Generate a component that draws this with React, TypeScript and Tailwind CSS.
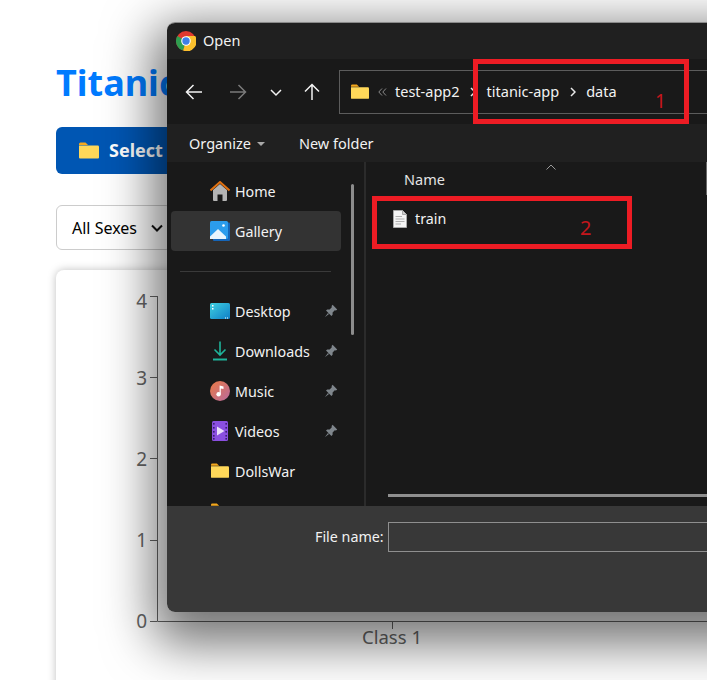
import React from 'react';

const FONT = "font-['Noto_Sans','Open_Sans',sans-serif]";

// Small helpers for the Windows shell icons
const ChromeIcon = () => (
  <svg width="20" height="20" viewBox="0 0 20 20">
    <circle cx="10" cy="10" r="10" fill="#e0392e" />
    <path d="M10 10 L1.34 5 A10 10 0 0 0 7.2 19.6 Z" fill="#2e9e4f" />
    <path d="M10 5 H19.2 A10 10 0 0 1 7.2 19.6 L10 10 Z" fill="#fbc02d" />
    <circle cx="10" cy="10" r="4.8" fill="#fff" />
    <circle cx="10" cy="10" r="3.7" fill="#3f7fe8" />
  </svg>
);

const FolderIcon = ({ size = 20 }: { size?: number }) => (
  <svg width={size} height={size * 0.85} viewBox="0 0 20 17">
    <path d="M0 2 Q0 0.5 1.5 0.5 H6.5 L9 3 H0 Z" fill="#f5a81c" />
    <path d="M0 3.5 H18.8 Q20 3.5 20 4.7 V15.5 Q20 16.5 19 16.5 H1 Q0 16.5 0 15.5 Z" fill="#ffd859" />
  </svg>
);

const PinIcon = () => (
  <svg width="14" height="14" viewBox="0 0 14 14" className="ml-auto">
    <path d="M8.6 0.8 L13.2 5.4 L12 6.4 L10.8 6.2 L8.6 8.4 L8.6 10.8 L7.4 12 L2 6.6 L3.2 5.4 L5.6 5.4 L7.8 3.2 L7.6 2 Z" fill="#7f868c" />
    <path d="M4 9 L0.8 13.2 L5 10 Z" fill="#7f868c" />
  </svg>
);

const HomeIcon = () => (
  <svg width="20" height="20" viewBox="0 0 20 20">
    <path d="M3 9 L10 3 L17 9 V19 Q17 20 16 20 H12.5 V13.5 H7.5 V20 H4 Q3 20 3 19 Z" fill="#b5b5b5" />
    <path d="M0.5 9.5 L10 1 L19.5 9.5" fill="none" stroke="#e07010" strokeWidth="2" />
  </svg>
);

const GalleryIcon = () => (
  <svg width="20" height="20" viewBox="0 0 20 20">
    <rect x="3" y="1.5" width="17" height="18.5" rx="1" fill="#1565b8" />
    <rect x="0" y="0" width="18" height="18" rx="1.5" fill="#2b9cec" />
    <path d="M0 18 V15.5 L8 8 L16 15.5 V18 Z" fill="#e8f4fc" />
    <circle cx="13.5" cy="4.5" r="1.3" fill="#fff" />
  </svg>
);

const DesktopIcon = () => (
  <svg width="20" height="16" viewBox="0 0 20 16">
    <defs>
      <linearGradient id="desk" x1="0" y1="0" x2="1" y2="1">
        <stop offset="0" stopColor="#3fd0e0" />
        <stop offset="1" stopColor="#0f7fc8" />
      </linearGradient>
    </defs>
    <rect width="20" height="16" rx="1.5" fill="url(#desk)" />
    <rect x="2" y="2" width="1.5" height="1.5" fill="#fff" />
    <rect x="2" y="5" width="1.5" height="1.5" fill="#fff" />
    <rect x="15" y="14.5" width="1" height="1" fill="#fff" />
    <rect x="17" y="14.5" width="1" height="1" fill="#fff" />
  </svg>
);

const DownloadIcon = () => (
  <svg width="20" height="20" viewBox="0 0 20 20" fill="none" stroke="#1fb39a" strokeWidth="1.6">
    <path d="M10 0.5 V13.5 M4.5 8.5 L10 14 L15.5 8.5" />
    <path d="M3 18.5 H17" strokeWidth="2" />
  </svg>
);

const MusicIcon = () => (
  <svg width="20" height="20" viewBox="0 0 20 20">
    <defs>
      <linearGradient id="music" x1="0" y1="0" x2="1" y2="1">
        <stop offset="0" stopColor="#ea7a45" />
        <stop offset="1" stopColor="#b76a9e" />
      </linearGradient>
    </defs>
    <circle cx="10" cy="10" r="10" fill="url(#music)" />
    <circle cx="8.6" cy="13.2" r="2.2" fill="#fff" />
    <path d="M9.6 13 V4.5 L13.5 5.5 V8 L10.8 7.4 V13 Z" fill="#fff" />
  </svg>
);

const VideoIcon = () => (
  <svg width="16" height="20" viewBox="0 0 16 20">
    <rect width="16" height="20" rx="1.5" fill="#8a4fe0" />
    <path d="M5 5.5 L12.5 10 L5 14.5 Z" fill="#e9defa" />
    {[2, 6, 10, 14, 17].map((y) => (
      <g key={y}>
        <rect x="1" y={y} width="1.6" height="1.6" fill="#3a1d73" />
        <rect x="13.4" y={y} width="1.6" height="1.6" fill="#3a1d73" />
      </g>
    ))}
  </svg>
);

const FileIcon = () => (
  <svg width="14" height="18" viewBox="0 0 14 18">
    <path d="M0.5 0.5 H9.5 L13.5 4.5 V17.5 H0.5 Z" fill="#f4f4f4" stroke="#a8a8a8" />
    <path d="M9.5 0.5 V4.5 H13.5" fill="#cfcfcf" stroke="#a8a8a8" />
    <path d="M2.5 6.5 H9 M2.5 9 H11.5 M2.5 11.5 H11.5 M2.5 14 H8" stroke="#b0b0b0" />
  </svg>
);

const ArrowIcon = ({ d, color }: { d: string; color: string }) => (
  <svg width="18" height="18" viewBox="0 0 18 18" fill="none" stroke={color} strokeWidth="1.5">
    <path d={d} />
  </svg>
);

// Breadcrumb separator, centred in the gap between two path parts
const Crumb = () => (
  <span className="flex w-[27px] shrink-0 justify-center">
    <svg width="6" height="10" viewBox="0 0 6 10" fill="none" stroke="#e8e8e8" strokeWidth="1.5">
      <path d="M1 1 L5 5 L1 9" />
    </svg>
  </span>
);

const places = [
  { name: 'Desktop', icon: <DesktopIcon />, pinned: true },
  { name: 'Downloads', icon: <DownloadIcon />, pinned: true },
  { name: 'Music', icon: <MusicIcon />, pinned: true },
  { name: 'Videos', icon: <VideoIcon />, pinned: true },
  { name: 'DollsWar', icon: <FolderIcon size={18} />, pinned: false },
  { name: '', icon: <FolderIcon size={18} />, pinned: false },
];

const SideRow = ({ icon, name, pinned, active }: { icon: React.ReactNode; name: string; pinned?: boolean; active?: boolean }) => (
  <div className={`flex h-10 w-[170px] shrink-0 items-center rounded-sm pr-[3px] ${active ? 'bg-[#333333]' : ''}`}>
    <span className="ml-[29px] mr-[-4px] flex w-[39px] shrink-0 justify-center">{icon}</span>
    <span className="pt-[2px] text-[14.3px] text-[#f2f2f2]">{name}</span>
    {pinned && <PinIcon />}
  </div>
);

// Chart sitting in the white card, mostly covered by the dialog
const Chart = () => {
  const ticks = [
    { label: '4', y: 296, base: 308 },
    { label: '3', y: 377, base: 385 },
    { label: '2', y: 458, base: 466 },
    { label: '1', y: 540, base: 547 },
    { label: '0', y: 621, base: 628 },
  ];
  return (
    <svg width="660" height="410" viewBox="56 270 660 410" className="block">
      <path d="M157.5 296 V621.5 H716" fill="none" stroke="#666666" />
      {ticks.map((t) => (
        <g key={t.label}>
          <path d={`M150 ${t.y + 0.5} H157`} stroke="#666666" />
          <text x="147" y={t.base} textAnchor="end" fontSize="19" fill="#666666" fontFamily="Noto Sans, sans-serif">
            {t.label}
          </text>
        </g>
      ))}
      <path d="M392.5 622 V629" stroke="#666666" />
      <text x="392" y="644" textAnchor="middle" fontSize="18.5" fill="#666666" fontFamily="Noto Sans, sans-serif">
        Class 1
      </text>
    </svg>
  );
};

const OpenDialog = () => (
  <div className={`absolute left-[167px] top-[22px] flex h-[590px] w-[640px] flex-col overflow-hidden rounded-l-lg border-t border-t-[#8a8a8a] shadow-[0_18px_50px_14px_rgba(0,0,0,0.55)] ${FONT}`}>
    {/* Title bar */}
    <div className="flex h-[36px] shrink-0 items-center gap-[7px] bg-[#202020] pb-[1px] pl-[9px]">
      <ChromeIcon />
      <span className="text-[14.5px] text-[#f2f2f2]">Open</span>
    </div>

    {/* Navigation bar */}
    <div className="flex h-[65px] shrink-0 items-center bg-[#191919]">
      <span className="ml-[18px]"><ArrowIcon d="M17 9 H1.5 M8.5 2 L1.5 9 L8.5 16" color="#f2f2f2" /></span>
      <span className="ml-[26px]"><ArrowIcon d="M1 9 H16.5 M9.5 2 L16.5 9 L9.5 16" color="#7a7a7a" /></span>
      <span className="ml-[20px]"><ArrowIcon d="M4 7 L9 12 L14 7" color="#f2f2f2" /></span>
      <span className="ml-[18px]"><ArrowIcon d="M9 17 V1.5 M2 8.5 L9 1.5 L16 8.5" color="#f2f2f2" /></span>
      <div className="ml-[18px] flex h-[44px] flex-1 items-center border border-[#5c5c5c] pl-[11px] text-[14.5px] text-[#f2f2f2]">
        <FolderIcon size={18} />
        <span className="flex w-[26px] shrink-0 justify-center">
          <svg width="9" height="8" viewBox="0 0 9 8" fill="none" stroke="#8a8a8a">
            <path d="M4 0.5 L0.8 4 L4 7.5 M8 0.5 L4.8 4 L8 7.5" />
          </svg>
        </span>
        <span>test-app2</span>
        <Crumb />
        <span>titanic-app</span>
        <Crumb />
        <span>data</span>
      </div>
    </div>

    {/* Command bar */}
    <div className="flex h-[38px] shrink-0 items-center bg-[#202020] pl-[22px] pt-[2px] text-[14.5px] text-[#f2f2f2]">
      <span>Organize</span>
      <span className="ml-[6px] h-0 w-0 border-x-[4px] border-t-[4px] border-x-transparent border-t-[#a8a8a8]" />
      <span className="ml-[34px]">New folder</span>
    </div>

    {/* Body */}
    <div className="flex min-h-0 flex-1 bg-[#191919]">
      <div className="flex w-[197px] shrink-0 overflow-hidden pl-[4px] pt-[9px]">
        <div className="flex w-[170px] flex-col">
          <SideRow icon={<HomeIcon />} name="Home" />
          <SideRow icon={<GalleryIcon />} name="Gallery" active />
          <div className="flex h-10 shrink-0 items-center pl-[9px]">
            <div className="h-px w-[151px] bg-[#3a3a3a]" />
          </div>
          {places.map((p) => (
            <SideRow key={p.name} icon={p.icon} name={p.name} pinned={p.pinned} />
          ))}
        </div>
        <div className="ml-[10px] mt-[13px] h-[151px] w-[3px] shrink-0 rounded-full bg-[#8c8c8c]" />
      </div>
      <div className="w-[2px] shrink-0 bg-[#2b2b2b]" />
      <div className="flex min-w-0 flex-1 flex-col">
        <div className="relative h-[35px] shrink-0 pl-[38px] pt-[7px] text-[14.5px] leading-[20px] text-[#e4e4e4]">
          Name
          <svg width="10" height="6" viewBox="0 0 10 6" fill="none" stroke="#9a9a9a" className="absolute left-[180px] top-[2px]">
            <path d="M0.5 5.5 L5 1 L9.5 5.5" />
          </svg>
          <div className="absolute left-[340px] top-0 h-[33px] w-px bg-[#6a6a6a]" />
        </div>
        <div className="flex h-[44px] shrink-0 items-center gap-[8px] pl-[27px] text-[14.3px] text-[#f2f2f2]">
          <FileIcon />
          <span>train</span>
        </div>
        <div className="mb-[9px] ml-[22px] mt-auto h-[3px] bg-[#8f8f8f]" />
      </div>
    </div>

    {/* File name footer */}
    <div className="flex h-[106px] shrink-0 items-start bg-[#383838] pl-[148px] pt-[16px]">
      <span className="h-[30px] text-[14.3px] leading-[30px] text-[#f2f2f2]">File name:</span>
      <div className="ml-[4px] h-[30px] flex-1 border border-[#8f8f8f]" />
    </div>
  </div>
);

export default function App() {
  return (
    <div className={`relative h-[680px] w-[707px] overflow-hidden bg-white ${FONT}`}>
      {/* Page behind the dialog */}
      <div className="flex w-[760px] flex-col pl-[56px] pt-[58px]">
        <h1 className="text-[36px] font-bold leading-[50px] text-[#007bff]">Titanic</h1>
        <div className="mt-[19px] flex h-[47px] w-[300px] items-center gap-[10px] rounded-md bg-[#0056b3] pl-[23px] text-[18px] font-bold text-white">
          <FolderIcon size={20} />
          Select
        </div>
        <div className="mt-[31px] flex h-[45px] w-[116px] items-center rounded-md border border-[#cccccc] bg-white pl-[15px] text-[16px] text-black">
          All Sexes
          <svg width="12" height="8" viewBox="0 0 12 8" fill="none" stroke="#111" strokeWidth="2" className="ml-[14px]">
            <path d="M1 1.5 L6 6.5 L11 1.5" />
          </svg>
        </div>
        <div className="mt-[20px] h-[500px] rounded-lg bg-white shadow-[0_0_8px_rgba(0,0,0,0.25)]">
          <Chart />
        </div>
      </div>

      <OpenDialog />

      {/* Red annotations drawn over the screenshot */}
      <div className="absolute left-[473px] top-[59px] h-[65px] w-[216px] border-[5px] border-[#ed1c24]" />
      <div className="absolute left-[372px] top-[196px] h-[53px] w-[260px] border-[5px] border-[#ed1c24]" />
      <span className="absolute left-[655px] top-[88px] text-[19px] leading-[26px] text-[#c4161c]">1</span>
      <span className="absolute left-[580px] top-[214px] text-[20px] leading-[28px] text-[#c4161c]">2</span>
    </div>
  );
}
